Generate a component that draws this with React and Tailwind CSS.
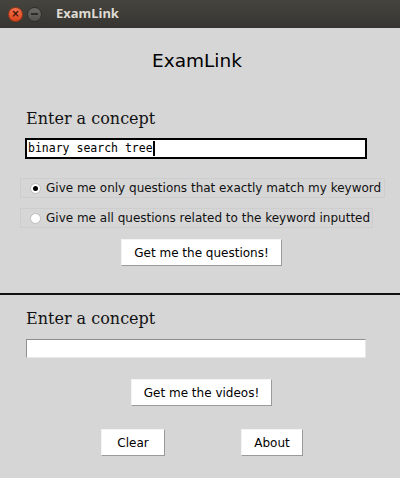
import React, { useState } from "react";

const sans = "font-['DejaVu_Sans',sans-serif]";

function TkButton({ children, className }) {
    return (
        <button
            className={`bg-white border border-t-[#f4f4f4] border-l-[#f4f4f4] border-r-[#9a9a9a] border-b-[#9a9a9a] text-[12px] text-black leading-none ${sans} ${className}`}
        >
            {children}
        </button>
    );
}

function Radio({ checked, label, onClick, className }) {
    return (
        <div
            onClick={onClick}
            className={`flex items-center h-[20px] border border-[#cdcdcd] ${className}`}
        >
            <span className="shrink-0 ml-[9px] w-[11px] h-[11px] rounded-full bg-white border border-[#bdbdbd] flex items-center justify-center">
                {checked && <span className="w-[5px] h-[5px] rounded-full bg-black" />}
            </span>
            <span className={`ml-[5px] text-[12px] text-[#111] whitespace-nowrap ${sans}`}>
                {label}
            </span>
        </div>
    );
}

export default function App() {
    const [mode, setMode] = useState("exact");

    return (
        <div className="w-[400px] h-[478px] bg-[#d6d6d6] flex flex-col overflow-hidden">
            {/* window title bar */}
            <div className="h-[28px] shrink-0 flex items-center bg-gradient-to-b from-[#45443f] to-[#363531]">
                <span className="ml-[8px] w-[15px] h-[15px] rounded-full bg-gradient-to-b from-[#f3714b] to-[#d9441b] border border-[#9f3516] flex items-center justify-center text-[10px] leading-none text-[#3a1208] font-bold font-['DejaVu_Sans',sans-serif]">
                    ×
                </span>
                <span className="ml-[4px] w-[15px] h-[15px] rounded-full bg-gradient-to-b from-[#6b6a66] to-[#53524e] border border-[#2e2d2a] flex items-center justify-center">
                    <span className="w-[7px] h-[2px] bg-[#2e2d2a]" />
                </span>
                <span className="ml-[14px] text-[13px] font-bold text-[#dfdbd2] font-['Noto_Sans',sans-serif]">
                    ExamLink
                </span>
            </div>

            <div className={`mt-[21px] h-[24px] pr-[6px] text-center text-[18.5px] leading-[24px] text-black ${sans}`}>
                ExamLink
            </div>

            {/* question search */}
            <div className="mt-[36px] ml-[26px] h-[20px] text-[16px] leading-[20px] text-[#111] font-['DejaVu_Serif',serif]">
                Enter a concept
            </div>
            <div className="mt-[9px] ml-[25px] w-[342px] h-[21px] bg-white border-2 border-black flex items-center">
                <span className="ml-[1px] text-[11.5px] text-black font-['DejaVu_Sans_Mono',monospace]">
                    binary search tree
                </span>
                <span className="w-[2px] h-[15px] bg-black" />
            </div>

            <Radio
                className="mt-[19px] ml-[20px] w-[365px]"
                checked={mode === "exact"}
                onClick={() => setMode("exact")}
                label="Give me only questions that exactly match my keyword"
            />
            <Radio
                className="mt-[10px] ml-[20px] w-[353px]"
                checked={mode === "related"}
                onClick={() => setMode("related")}
                label="Give me all questions related to the keyword inputted"
            />
            <TkButton className="mt-[11px] ml-[121px] w-[161px] h-[27px]">
                Get me the questions!
            </TkButton>

            <div className="mt-[27px] h-[2px] bg-[#111]" />

            {/* video search */}
            <div className="mt-[14px] ml-[26px] h-[20px] text-[16px] leading-[20px] text-[#111] font-['DejaVu_Serif',serif]">
                Enter a concept
            </div>
            <div className="mt-[10px] ml-[26px] w-[340px] h-[19px] bg-white border border-t-[#8f8f8f] border-l-[#8f8f8f] border-r-[#e8e8e8] border-b-[#e8e8e8]" />

            <TkButton className="mt-[21px] ml-[131px] w-[141px] h-[27px]">
                Get me the videos!
            </TkButton>

            <div className="mt-[23px] flex">
                <TkButton className="ml-[101px] w-[64px] h-[27px]">Clear</TkButton>
                <TkButton className="ml-[76px] w-[62px] h-[27px]">About</TkButton>
            </div>
        </div>
    );
}
